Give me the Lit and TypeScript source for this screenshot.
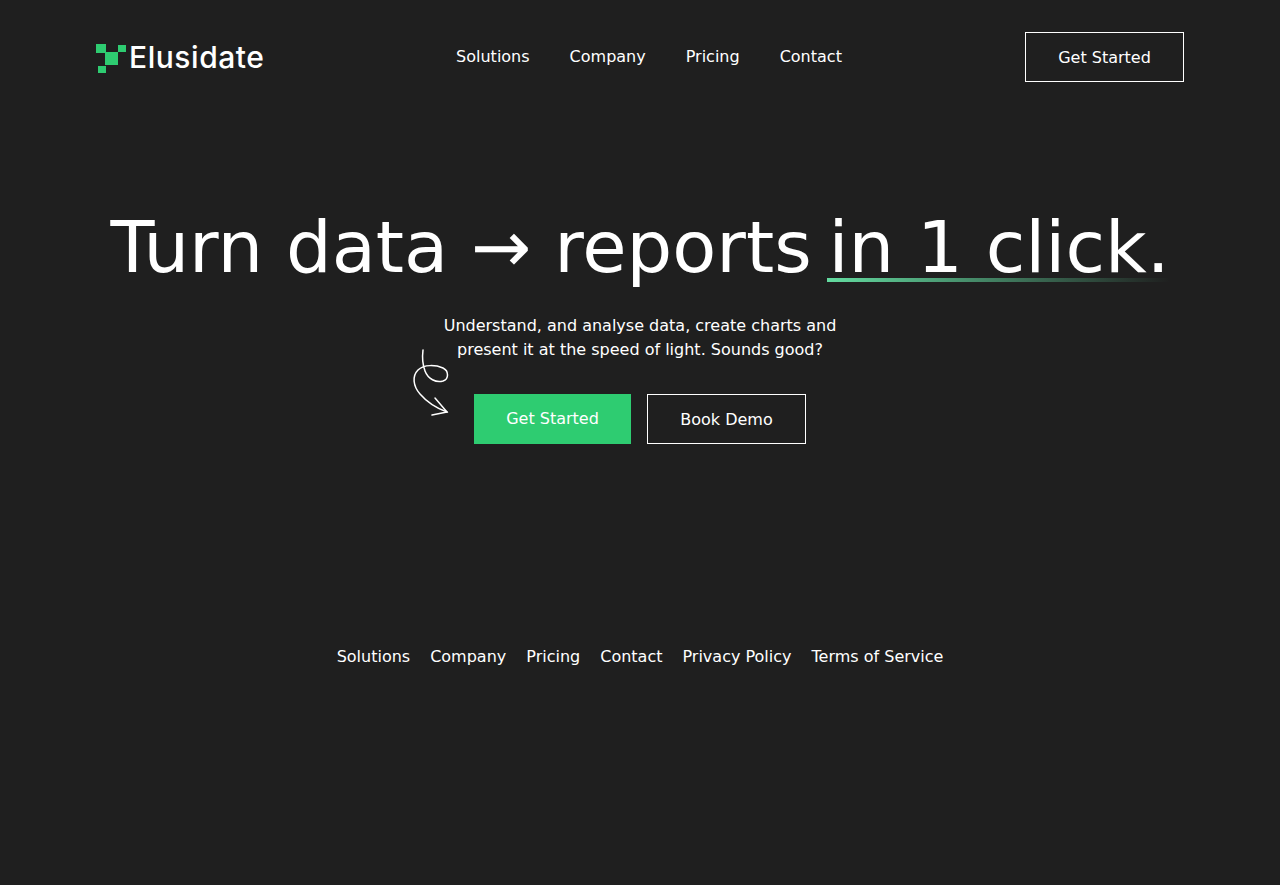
import { LitElement, html, css } from "lit";
import { customElement } from "lit/decorators.js";

const links = ["Solutions", "Company", "Pricing", "Contact"];
const footerLinks = [...links, "Privacy Policy", "Terms of Service"];

@customElement("app-root")
export class AppRoot extends LitElement {
  static styles = css`
    :host {
      display: block;
      min-height: 885px;
      background: #1f1f1f;
      color: #fff;
      font-family: "DejaVu Sans", sans-serif;
      font-size: 16px;
      line-height: 24px;
    }
    a {
      color: inherit;
      text-decoration: none;
    }
    .header {
      display: flex;
      align-items: center;
      justify-content: space-between;
      padding: 32px 96px 0;
    }
    .logo {
      display: flex;
      align-items: center;
      gap: 3px;
      width: 177px;
      height: 50px;
      font-family: "Inter", sans-serif;
      font-size: 30px;
      font-weight: 500;
      letter-spacing: 0.55px;
    }
    .logo svg {
      flex: none;
      margin-top: 2px;
    }
    .nav {
      display: flex;
      gap: 40px;
    }
    .btn {
      display: block;
      box-sizing: border-box;
      width: 159px;
      height: 50px;
      line-height: 50px;
      text-align: center;
      border: 1px solid #fff;
    }
    .btn.primary {
      width: 157px;
      background: #2ecc71;
      border: 0;
    }
    .hero {
      display: flex;
      flex-direction: column;
      align-items: center;
      padding-top: 120px;
    }
    h1 {
      margin: 0;
      font-size: 72px;
      line-height: 90px;
      font-weight: 400;
      white-space: nowrap;
    }
    .mark {
      position: relative;
      display: inline-block;
      margin-left: -6px;
    }
    .mark::after {
      content: "";
      position: absolute;
      left: -2px;
      right: 0;
      top: 76px;
      height: 4px;
      background: linear-gradient(90deg, #63dba0, rgba(46, 204, 113, 0));
    }
    .lead {
      margin: 22px 0 0;
      width: 420px;
      text-align: center;
    }
    .actions {
      position: relative;
      display: flex;
      gap: 16px;
      margin-top: 32px;
    }
    .arrow {
      position: absolute;
      left: -62px;
      top: -45px;
    }
    .footer {
      display: flex;
      justify-content: center;
      gap: 20px;
      margin-top: 201px;
    }
  `;

  render() {
    return html`
      <header class="header">
        <a class="logo" href="#">
          <svg width="30" height="29" viewBox="0 0 30 29" fill="#2ecc71">
            <rect x="0" y="0" width="10" height="9" />
            <rect x="22" y="1" width="8" height="7" />
            <rect x="9" y="8" width="13" height="13" />
            <rect x="2" y="22" width="8" height="7" />
          </svg>
          <span>Elusidate</span>
        </a>
        <nav class="nav">${links.map((l) => html`<a href="#">${l}</a>`)}</nav>
        <a class="btn" href="#">Get Started</a>
      </header>
      <main class="hero">
        <h1>Turn data → reports <span class="mark">in 1 click.</span></h1>
        <p class="lead">Understand, and analyse data, create charts and present it at the speed of light. Sounds good?</p>
        <div class="actions">
          <svg class="arrow" width="40" height="68" viewBox="0 0 40 68" fill="none" stroke="#fff" stroke-width="1.5" stroke-linecap="round">
            <path d="M11 1C10 9 10 14 13 22C16 30 24 34 31 32C37 30 37 22 31 19C24 16 12 15 6 21C0 27 1 37 8 45C14 52 24 59 35 63" />
            <path d="M23 49L35 63L20 66" />
          </svg>
          <a class="btn primary" href="#">Get Started</a>
          <a class="btn" href="#">Book Demo</a>
        </div>
      </main>
      <footer class="footer">${footerLinks.map((l) => html`<a href="#">${l}</a>`)}</footer>
    `;
  }
}
